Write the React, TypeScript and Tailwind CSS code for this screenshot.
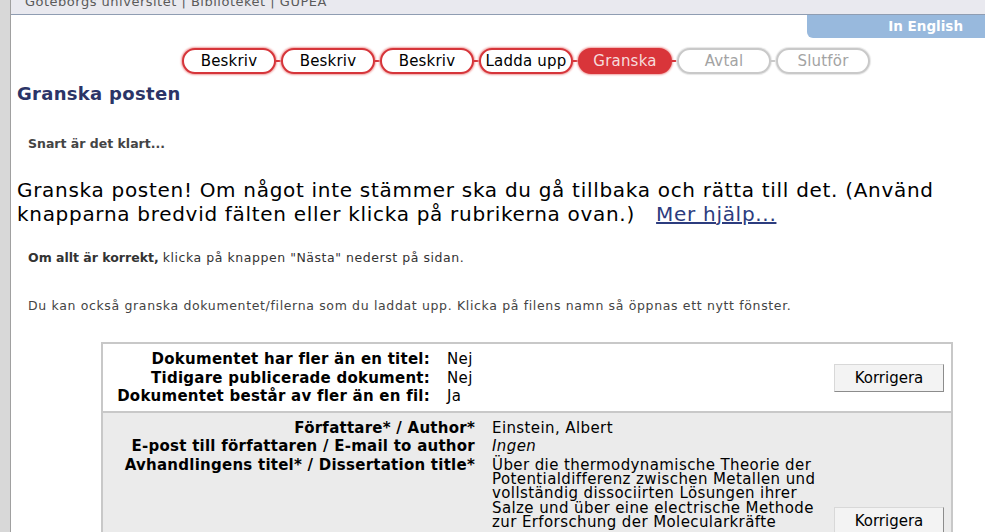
import React from 'react';

type Step = { label: string; state: 'done' | 'current' | 'todo' };

const steps: Step[] = [
  { label: 'Beskriv', state: 'done' },
  { label: 'Beskriv', state: 'done' },
  { label: 'Beskriv', state: 'done' },
  { label: 'Ladda upp', state: 'done' },
  { label: 'Granska', state: 'current' },
  { label: 'Avtal', state: 'todo' },
  { label: 'Slutför', state: 'todo' },
];

const font = "font-['DejaVu_Sans',Verdana,sans-serif]";

const StepPill: React.FC<{ step: Step; last: boolean }> = ({ step, last }) => {
  const pill =
    step.state === 'current'
      ? 'bg-[#d9353a] border-[#d9353a] text-[#f6dcdc] shadow-[0_0_2px_1px_#f0a0a0]'
      : step.state === 'done'
        ? 'bg-white border-[#d6353a] text-black shadow-[0_0_2px_1px_#f0a0a0]'
        : 'bg-white border-[#c9c9c9] text-[#a3a3a3] shadow-[0_0_1px_1px_#e6e6e6]';
  const line = step.state === 'todo' ? 'bg-[#c9c9c9]' : 'bg-[#d6353a]';
  return (
    <div className="flex items-center">
      <div
        className={`flex h-[26px] w-[94px] items-center justify-center rounded-[13px] border-2 text-[15px] tracking-[0.2px] ${pill}`}
      >
        {step.label}
      </div>
      {!last && <div className={`h-[2px] w-[5px] ${line}`} />}
    </div>
  );
};

const KorrigeraButton: React.FC = () => (
  <button className="h-[28px] w-[110px] border border-[#d8d8d8] border-b-[#8c8c8c] border-r-[#8c8c8c] bg-[#f3f3f3] text-[15px] text-black">
    Korrigera
  </button>
);

const App: React.FC = () => {
  return (
    <div className={`flex h-[532px] overflow-hidden bg-white ${font}`}>
      <div className="w-[11px] shrink-0 border-r border-[#a0a0a0] bg-[#d8d8d8]" />
      <div className="flex-1">
        <div className="h-[15px] overflow-hidden border-b border-[#8f9db2] bg-[#e9e9ef] pl-[14px]">
          <div className="-mt-[6px] text-[13px] leading-[16px] tracking-[0.5px] text-[#5a5a5a]">
            Göteborgs universitet | Biblioteket | GUPEA
          </div>
        </div>

        <div className="flex justify-end">
          <div className="flex h-[23px] w-[178px] items-center justify-end rounded-bl-[6px] bg-[#98b9dd] pr-[22px] text-[13.5px] font-bold text-white">
            In English
          </div>
        </div>

        <div className="mt-[10px] flex pl-[171px]">
          {steps.map((s, i) => (
            <StepPill key={i} step={s} last={i === steps.length - 1} />
          ))}
        </div>

        <h1 className="mt-[9px] pl-[6px] text-[18px] font-bold leading-[22px] tracking-[0.3px] text-[#2b3467]">
          Granska posten
        </h1>

        <p className="mt-[30px] pl-[17px] text-[12.5px] font-bold text-[#444]">Snart är det klart...</p>

        <p className="mt-[24px] pl-[6px] pr-[20px] text-[20px] leading-[24px] tracking-[0.7px] text-black">
          Granska posten! Om något inte stämmer ska du gå tillbaka och rätta till det. (Använd knapparna
          bredvid fälten eller klicka på rubrikerna ovan.){'\u00a0\u00a0 '}
          <a href="#" className="text-[#2c3c7e] underline">
            Mer hjälp...
          </a>
        </p>

        <p className="mt-[23px] pl-[17px] text-[12.5px] text-[#333]">
          <b>Om allt är korrekt,</b>{' '}
          <span className="tracking-[0.55px]">klicka på knappen "Nästa" nederst på sidan.</span>
        </p>

        <p className="mt-[29px] pl-[17px] text-[12.5px] tracking-[0.65px] text-[#444]">
          Du kan också granska dokumentet/filerna som du laddat upp. Klicka på filens namn så öppnas ett nytt
          fönster.
        </p>

        <div className="ml-[90px] mt-[27px] w-[852px] border-2 border-b-0 border-[#c8c8c8] text-[15px] text-black">
          <div className="flex items-center border-b-2 border-[#c8c8c8] bg-white pb-[5px] pt-[6px] pr-[7px]">
            <div className="flex flex-1">
              <div className="w-[327px] text-right font-bold leading-[18.5px] tracking-[0.25px]">
                <div>Dokumentet har fler än en titel:</div>
                <div>Tidigare publicerade dokument:</div>
                <div>Dokumentet består av fler än en fil:</div>
              </div>
              <div className="pl-[17px] leading-[18.5px] tracking-[0.4px]">
                <div>Nej</div>
                <div>Nej</div>
                <div>Ja</div>
              </div>
            </div>
            <KorrigeraButton />
          </div>

          <div className="flex bg-[#ebebeb] pb-[14px] pr-[7px] pt-[6px]">
            <div className="flex flex-1">
              <div className="w-[372px] text-right font-bold leading-[18.5px] tracking-[0.25px]">
                <div>Författare* / Author*</div>
                <div>E-post till författaren / E-mail to author</div>
                <div>Avhandlingens titel* / Dissertation title*</div>
              </div>
              <div className="w-[354px] pl-[17px] leading-[18.5px] tracking-[0.4px]">
                <div>Einstein, Albert</div>
                <div className="italic">Ingen</div>
                <div className="mt-[2px] leading-[14.3px]">
                  Über die thermodynamische Theorie der Potentialdifferenz zwischen Metallen und vollständig
                  dissociirten Lösungen ihrer Salze und über eine electrische Methode zur Erforschung der
                  Molecularkräfte
                </div>
              </div>
            </div>
            <div className="mt-[88px]">
              <KorrigeraButton />
            </div>
          </div>
        </div>
      </div>
    </div>
  );
};

export default App;
